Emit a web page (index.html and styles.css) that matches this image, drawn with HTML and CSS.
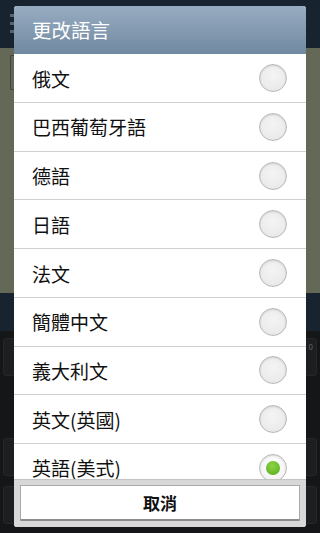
FILE: index.html
```html
<!DOCTYPE html>
<html lang="zh-Hant">
<head>
<meta charset="utf-8">
<title>更改語言</title>
<link rel="stylesheet" href="styles.css">
</head>
<body>
<div class="screen">
  <div class="topbar"><span class="menu-dots"><i></i><i></i><i></i></span></div>
  <div class="olive"><span class="input-edge"></span></div>
  <div class="navy"></div>
  <div class="darkarea">
    <div class="key-row"><span class="key key-l"></span><span class="key key-r"><b>0</b></span></div>
    <div class="key-row second"><span class="key key-l"></span><span class="key key-r"></span></div>
    <div class="key-row third"><span class="key key-l"></span><span class="key key-r"></span></div>
  </div>

  <div class="dialog">
    <div class="dialog-title">更改語言</div>
    <div class="dialog-list">
      <div class="row"><span class="label">俄文</span><span class="radio"></span></div>
      <div class="row"><span class="label">巴西葡萄牙語</span><span class="radio"></span></div>
      <div class="row"><span class="label">德語</span><span class="radio"></span></div>
      <div class="row"><span class="label">日語</span><span class="radio"></span></div>
      <div class="row"><span class="label">法文</span><span class="radio"></span></div>
      <div class="row"><span class="label">簡體中文</span><span class="radio"></span></div>
      <div class="row"><span class="label">義大利文</span><span class="radio"></span></div>
      <div class="row"><span class="label">英文(英國)</span><span class="radio"></span></div>
      <div class="row"><span class="label">英語(美式)</span><span class="radio checked"></span></div>
    </div>
    <div class="dialog-footer">
      <button class="cancel">取消</button>
    </div>
  </div>
</div>
</body>
</html>
```
FILE: styles.css
```css
* { box-sizing: border-box; }
html, body { margin: 0; padding: 0; }
body {
  width: 320px;
  height: 533px;
  overflow: hidden;
  font-family: "Noto Sans CJK TC", "Noto Sans", sans-serif;
  background: #161718;
}
.screen {
  position: relative;
  width: 320px;
  height: 533px;
  display: flex;
  flex-direction: column;
}
.topbar {
  height: 48px;
  background: #17232f;
  padding: 14px 0 0 10px;
}
.menu-dots {
  display: flex;
  flex-direction: column;
  gap: 5px;
}
.menu-dots i {
  display: block;
  width: 5px;
  height: 3px;
  background: #59636c;
}
.olive {
  height: 245px;
  background: #646856;
  padding: 7px 0 0 10px;
}
.input-edge {
  display: block;
  width: 8px;
  height: 35px;
  border: 1px solid #43463a;
  border-right: none;
  border-radius: 2px 0 0 2px;
}
.navy {
  height: 38px;
  background: #17232f;
}
.darkarea {
  flex: 1;
  background: #151617;
  padding-top: 7px;
  display: flex;
  flex-direction: column;
}
.key-row {
  display: flex;
  justify-content: space-between;
  padding: 0 3px;
  height: 38px;
}
.key-row.second { margin-top: 62px; }
.key-row.third { margin-top: 10px; }
.key {
  width: 16px;
  height: 100%;
  background: #1d1e20;
  border: 1px solid #262729;
  border-radius: 3px;
}
.key-r {
  position: relative;
  color: #666;
  font-size: 8px;
}
.key-r b {
  position: absolute;
  right: 3px;
  top: 2px;
  font-weight: normal;
}

.dialog {
  position: absolute;
  left: 14px;
  top: 6px;
  width: 292px;
  height: 521px;
  border-radius: 3px;
  overflow: hidden;
  display: flex;
  flex-direction: column;
  background: #fff;
}
.dialog-title {
  height: 48px;
  flex: none;
  background: linear-gradient(#98acc1, #7089a1);
  color: #fff;
  font-size: 19.5px;
  line-height: 48px;
  padding-left: 18px;
}
.dialog-list {
  height: 425px;
  flex: none;
  overflow: hidden;
  background: #fff;
}
.row {
  height: 48.72px;
  border-bottom: 1px solid #d0d0d0;
  display: flex;
  align-items: center;
  justify-content: space-between;
  padding: 0 19px 0 18px;
}
.row:first-child { height: 49px; }
.label {
  font-size: 19px;
  color: #111;
}
.radio {
  width: 28px;
  height: 28px;
  border-radius: 50%;
  border: 1px solid #b9b9b9;
  background: radial-gradient(circle at 50% 40%, #f4f4f4 0%, #ececec 60%, #e2e2e2 100%);
  box-shadow: inset 0 1px 2px rgba(0,0,0,0.12), 0 1px 0 rgba(255,255,255,0.8);
  display: flex;
  align-items: center;
  justify-content: center;
}
.radio.checked {
  background: radial-gradient(circle at 50% 40%, #ffffff 0%, #f4f4f4 70%, #e4e4e4 100%);
}
.radio.checked::after {
  content: "";
  width: 14px;
  height: 14px;
  border-radius: 50%;
  background: radial-gradient(circle at 45% 35%, #8fd14a 0%, #6cbf2a 55%, #4f9a1c 100%);
}
.dialog-footer {
  flex: 1;
  background: #d8d8d8;
  border-top: 1px solid #c4c4c4;
  padding: 5px 6px 6px;
  display: flex;
}
.cancel {
  flex: 1;
  margin: 0;
  background: #fff;
  border: 1px solid #a9a9a9;
  border-bottom: 2px solid #8c8c8c;
  border-radius: 1px;
  font-family: "Noto Sans CJK TC", "Noto Sans", sans-serif;
  font-size: 17px;
  font-weight: bold;
  color: #111;
  padding: 0;
}
```
